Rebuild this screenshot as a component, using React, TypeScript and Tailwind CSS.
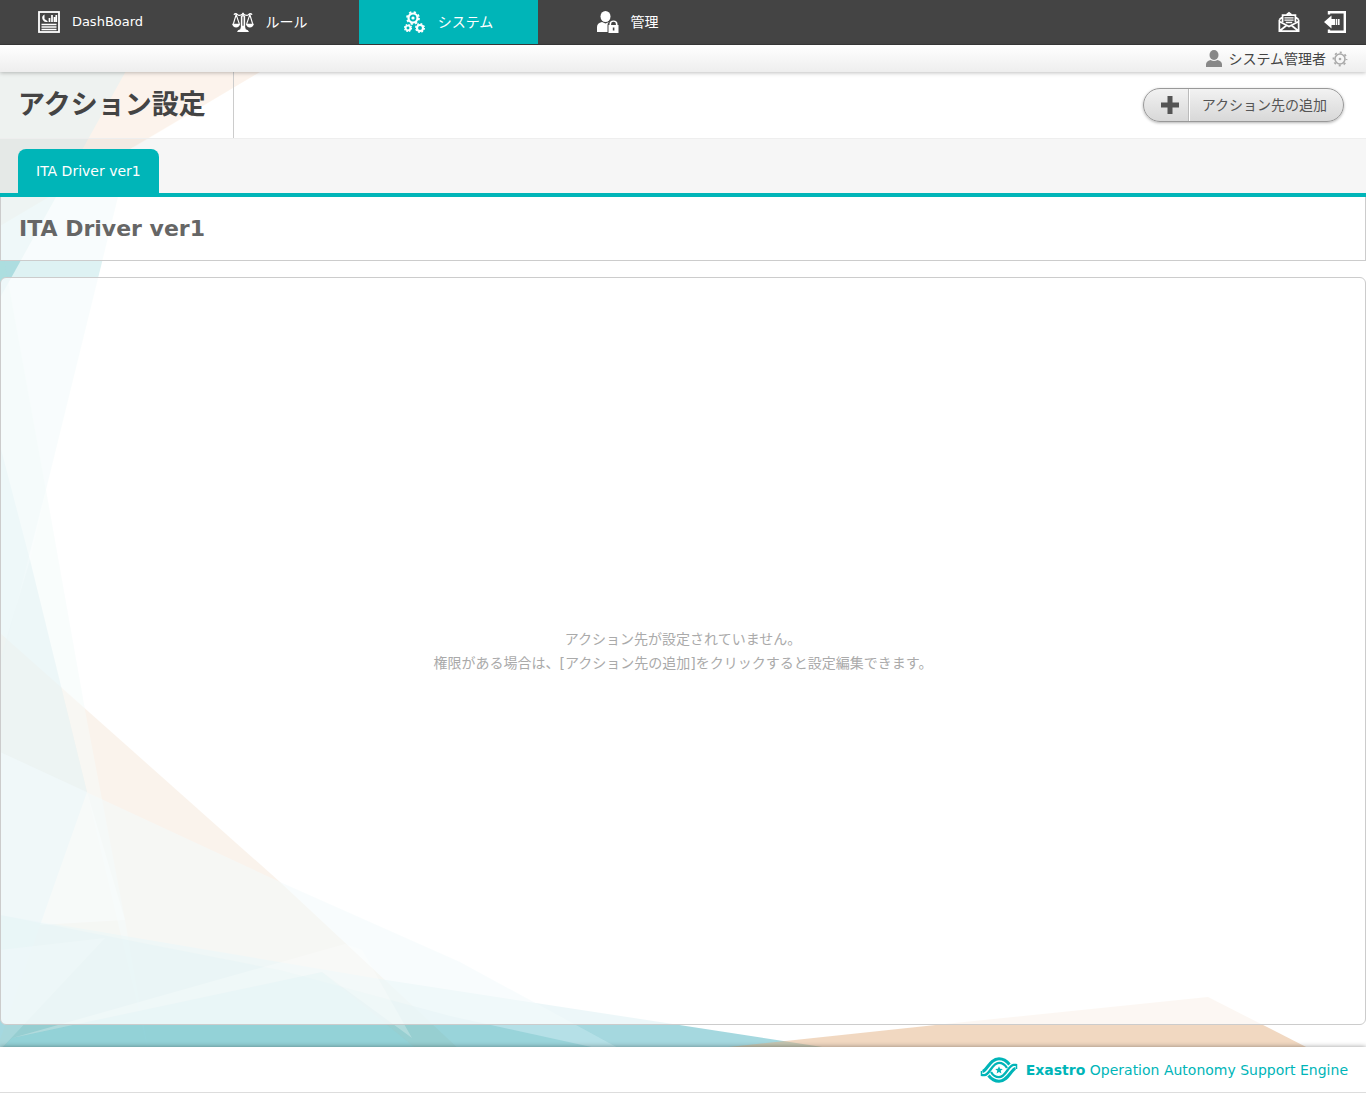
import React from "react";

function Backdrop() {
  return (
    <svg
      aria-hidden="true"
      className="absolute inset-0 -z-10 h-full w-full"
      viewBox="0 0 1366 1093"
      preserveAspectRatio="none"
    >
      <g>
        <polygon points="0,60 280,60 0,226" fill="#e69b61" fillOpacity=".6" />
        <polygon points="150,60 280,60 133,148" fill="#f6c9a0" fillOpacity=".3" />
        <polygon points="0,60 132,60 0,298" fill="#64bbc4" fillOpacity=".5" />
        <polygon points="0,197 118,197 46,490 0,670" fill="#a9dde0" fillOpacity=".38" />
        <polygon points="0,240 8,280 46,490 85,710 125,920 148,1050 0,1050" fill="#a9e4e0" fillOpacity=".28" />
        <polygon points="0,633 62,688 280,882 460,1050 0,1050" fill="#d59b61" fillOpacity=".6" />
        <polygon points="46,490 58,558 85,710 125,920 148,1050 87,792 30,560" fill="#dff1ee" fillOpacity=".5" />
        <polygon points="0,445 30,560 87,792 0,1040" fill="#8fcfd8" fillOpacity=".55" />
        <polygon points="30,560 87,792 0,752 0,660" fill="#8cc9cf" fillOpacity=".4" />
        <polygon points="0,915 380,979 842,1050 0,1050" fill="#69beca" fillOpacity=".6" />
        <polygon points="0,752 280,882 460,962 622,1050 0,1050" fill="#c3e8ec" fillOpacity=".55" />
        <polygon points="0,752 87,792 0,1040" fill="#a9dbec" fillOpacity=".5" />
        <polygon points="87,792 125,920 40,925" fill="#e4f6f8" fillOpacity=".5" />
        <polygon points="0,915 280,970 450,1016 605,1050 0,1050" fill="#7dc8ce" fillOpacity=".5" />
        <polygon points="12,1038 322,972 418,1050 0,1050" fill="#8fd6dd" fillOpacity=".5" />
        <polygon points="0,1050 105,938 0,950" fill="#d2ecf2" fillOpacity=".3" />
        <polygon points="12,1038 345,944 362,950 412,1038 322,972" fill="#ffffff" fillOpacity=".25" />
        <polygon points="700,1050 945,1024 1208,997 1312,1050" fill="#e3b283" fillOpacity=".5" />
      </g>
    </svg>
  );
}

function DashboardIcon() {
  return (
    <svg aria-hidden="true" width="22" height="22" viewBox="0 0 22 22" fill="none" stroke="#fff">
      <rect x="1" y="1" width="20" height="20" strokeWidth="1.8" />
      <path d="M11.500 11V7M14 11V4M16.500 11V6M18.300 11V4" strokeWidth="1.700" />
      <path d="M6.500 3.500A3.900 3.900 0 1 0 10 10.500L6.500 8Z" fill="#fff" stroke="none" />
      <path d="M3.500 13.500h15M3.500 16h15M3.500 18.500h15" strokeWidth="1.500" />
    </svg>
  );
}

function ScalesIcon() {
  return (
    <svg aria-hidden="true" width="22" height="22" viewBox="0 0 24 22" fill="none" stroke="#fff" strokeWidth="1.3">
      <path d="M2 3q2-2 4 0t6-1q4 3 6 1t4 0M4.500 3L1.500 13M4.500 3l3.500 10M19.500 3L16 13M19.500 3l3 10" />
      <path d="M12 1v4M10.500 4v12M13.500 4v12" strokeWidth="1.700" />
      <path d="M0 13h9q-1 4-4.500 4T0 13ZM15 13h9q-1 4-4.500 4T15 13ZM10 15h4l1 4q3 .5 3.500 3h-13q.5-2.500 3.500-3Z" fill="#fff" stroke="none" />
    </svg>
  );
}

function GearsIcon() {
  return (
    <svg aria-hidden="true" width="22" height="22" viewBox="0 0 22 22" fill="none" stroke="#fff">
      <circle cx="9" cy="7" r="4.500" strokeWidth="2.200" />
      <circle cx="9" cy="7" r="6" strokeWidth="1.800" strokeDasharray="2.300 2.410" />
      <circle cx="9" cy="7" r="1.600" fill="#fff" stroke="none" />
      <circle cx="4" cy="17" r="2.400" strokeWidth="1.900" />
      <circle cx="4" cy="17" r="3.500" strokeWidth="1.200" strokeDasharray="1.500 1.250" />
      <circle cx="16" cy="17" r="3" strokeWidth="2.100" />
      <circle cx="16" cy="17" r="4.300" strokeWidth="1.400" strokeDasharray="1.800 1.577" />
    </svg>
  );
}

function AdminIcon() {
  return (
    <svg aria-hidden="true" width="22" height="22" viewBox="0 0 22 22" fill="#fff">
      <ellipse cx="8.500" cy="5.500" rx="5" ry="5.500" />
      <path d="M0 21v-5q0-4 5-5l3.500 1.500L12 11q-1.500 1-1.500 3v7Z" />
      <path d="M11.500 14h10v8h-10zM12.500 14v-1a4 3.500 0 0 1 8 0v1h-1.600v-1a2.400 2.200 0 0 0-4.800 0v1Z" />
      <path d="M15.800 16.500h1.600v3h-1.600z" fill="#444" />
    </svg>
  );
}

function MailIcon() {
  return (
    <svg aria-hidden="true" width="22" height="22" viewBox="0 0 24 22" fill="none" stroke="#fff" strokeWidth="1.900">
      <path d="M1.500 8.500V21h21V8.500M1.500 8.500L5 5.500M22.500 8.500L19 5.500M5 11V3.500h14V11M9.500 3L12 1l2.500 2M1.500 10.500L12 16l10.500-5.500M2 20.500L9.500 14.500M22 20.500L14.500 14.500" />
      <path d="M7 6.500h10M7 9h10M8.500 11.500h7" strokeWidth="1.500" />
    </svg>
  );
}

function LogoutIcon() {
  return (
    <svg aria-hidden="true" width="22" height="22" viewBox="0 0 22 22">
      <path d="M5 3.500V1.200h15.800v19.600H5v-2.300" fill="none" stroke="#fff" strokeWidth="2.400" />
      <path d="M0 11l7.500-6.500V8H11v6H7.500v3.500ZM11.700 8h1.600v6h-1.600zM14 8h1.600v6H14z" fill="#fff" />
    </svg>
  );
}

function UserIcon() {
  return (
    <svg aria-hidden="true" width="16" height="18" viewBox="0 0 16 18" fill="#888">
      <ellipse cx="8" cy="5" rx="4.500" ry="5" />
      <path d="M0 17v-2.500Q0 11 4.500 10q3.500 2 7 0Q16 11 16 14.500V17Z" />
    </svg>
  );
}

function SettingsIcon() {
  return (
    <svg aria-hidden="true" width="16" height="16" viewBox="0 0 16 16" fill="none" stroke="#aaa">
      <circle cx="8" cy="8" r="5" strokeWidth="1.600" />
      <circle cx="8" cy="8" r="6.500" strokeWidth="1.800" strokeDasharray="2.100 3.005" strokeDashoffset="1.050" />
      <circle cx="8" cy="8" r="1.300" fill="#aaa" stroke="none" />
    </svg>
  );
}

function Logo() {
  return (
    <svg aria-hidden="true" width="38" height="26" viewBox="0 0 38 26" fill="none" stroke="#00b5b8">
      <path d="M2.500 14.500C7 13.500 10 1.800 19 1.800q6 0 10.500 5.700" strokeWidth="3" />
      <path d="M1.500 18.200h3C10 17.500 12 5.800 19 5.800q5 0 8 5.200" strokeWidth="2.300" />
      <path d="M35.500 11.500C31 12.500 28 24.200 19 24.200q-6 0-10.500-5.700" strokeWidth="3" />
      <path d="M36.500 7.800h-3C28 8.500 26 20.200 19 20.200q-5 0-8-5.200" strokeWidth="2.300" />
      <path d="M1.500 14v5M36.500 7v5" strokeWidth="1.500" />
      <path d="M19 9.300l1.100 2.500 2.700.2-2.100 1.800.7 2.700-2.400-1.400-2.400 1.400.7-2.700-2.100-1.800 2.700-.2Z" fill="#00b5b8" stroke="none" />
    </svg>
  );
}

const navItems = [
  { label: "DashBoard", icon: <DashboardIcon />, style: "flex w-[179px] items-center justify-center gap-3 text-[13px]" },
  { label: "ルール", icon: <ScalesIcon />, style: "flex w-[179px] items-center justify-center gap-3 text-sm" },
  { label: "システム", icon: <GearsIcon />, style: "flex w-[179px] items-center justify-center gap-3 bg-[#00b5b8] text-sm" },
  { label: "管理", icon: <AdminIcon />, style: "flex w-[179px] items-center justify-center gap-3 text-sm" },
];

export default function App() {
  return (
    <div className="relative isolate flex min-h-screen flex-col bg-white font-['DejaVu_Sans','Noto_Sans_CJK_JP',sans-serif] text-sm text-[#444]">
      <Backdrop />
      <header className="relative z-10">
        <div className="flex h-[45px] items-stretch justify-between border-b border-[#3a3a3a] bg-[#444] text-white">
          <nav className="flex pl-px">
            {navItems.map((item) => (
              <a key={item.label} href="#" className={item.style}>
                {item.icon}
                <span>{item.label}</span>
              </a>
            ))}
          </nav>
          <div className="flex items-center gap-6 pr-5">
            <button type="button" aria-label="メッセージ"><MailIcon /></button>
            <button type="button" aria-label="ログアウト"><LogoutIcon /></button>
          </div>
        </div>
        <div className="flex h-[27px] items-center justify-end gap-1.5 bg-linear-to-b from-white to-[#eee] pr-[18px] shadow-[0_1px_4px_rgba(0,0,0,0.25)]">
          <UserIcon />
          <span>システム管理者</span>
          <button type="button" aria-label="設定"><SettingsIcon /></button>
        </div>
      </header>
      <div className="flex h-[67px] items-center justify-between border-b border-[#eee] bg-white/80 pr-[22px]">
        <h1 className="flex h-full w-[234px] items-center border-r border-[#ccc] pl-[18px] text-[27px] font-bold">アクション設定</h1>
        <button type="button" className="flex h-[34px] items-stretch rounded-full border border-[#999] bg-linear-to-b from-[#f2f2f2] to-[#d8d8d8] text-[#555] shadow-[0_1px_3px_rgba(0,0,0,0.3)]">
          <span className="flex w-[45px] items-center justify-center border-r border-[#bbb] pl-2">
            <svg aria-hidden="true" width="18" height="18" viewBox="0 0 18 18">
              <path d="M9 0v18M0 9h18" stroke="#555" strokeWidth="5" />
            </svg>
          </span>
          <span className="flex items-center border-l border-white pr-4 pl-3">アクション先の追加</span>
        </button>
      </div>
      <div className="bg-white/80">
        <div role="tablist" className="flex h-[58px] items-end border-b-4 border-[#00b5b8] bg-black/[0.035] pl-[18px]">
          <button type="button" role="tab" aria-selected="true" className="h-11 rounded-t-lg bg-[#00b5b8] px-[18px] text-sm text-white">
            ITA Driver ver1
          </button>
        </div>
      </div>
      <h2 className="flex h-16 items-center border border-t-0 border-[#ccc] bg-white/80 pl-[18px] text-[22px] font-bold text-[#666]">
        ITA Driver ver1
      </h2>
      <main className="mt-4 mb-[22px] flex flex-1 items-center justify-center rounded-md border border-[#ccc] bg-white/80">
        <p className="text-center leading-6 text-[#aaa]">
          アクション先が設定されていません。
          <br />
          権限がある場合は、[アクション先の追加]をクリックすると設定編集できます。
        </p>
      </main>
      <footer className="flex h-[46px] items-center justify-end gap-2 border-b border-[#ddd] bg-white pr-[18px] text-[#00b5b8] shadow-[0_0_5px_rgba(0,0,0,0.4)]">
        <Logo />
        <span><strong>Exastro</strong> Operation Autonomy Support Engine</span>
      </footer>
    </div>
  );
}
